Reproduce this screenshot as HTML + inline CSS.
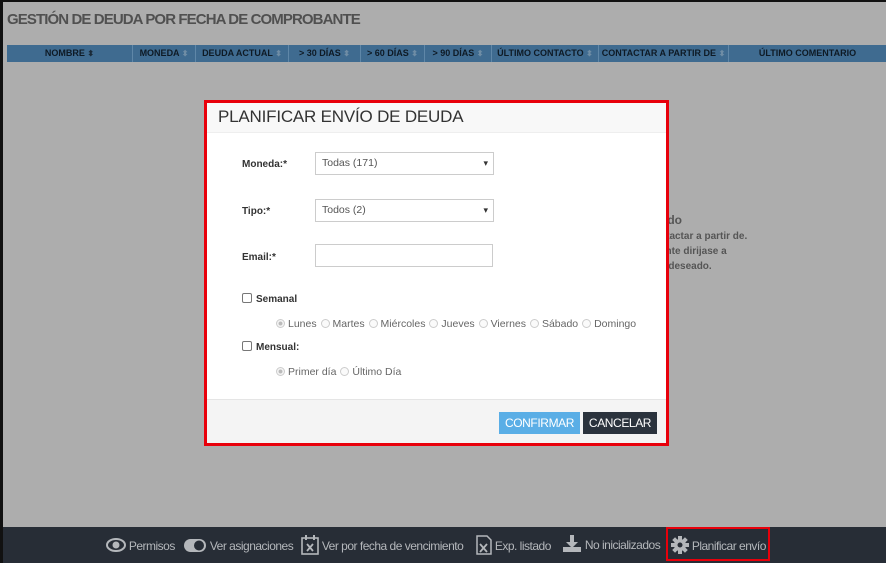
<!DOCTYPE html>
<html><head><meta charset="utf-8"><style>
*{box-sizing:border-box;margin:0;padding:0}
body{width:886px;height:563px;overflow:hidden;font-family:"Liberation Sans",sans-serif;background:#111;position:relative}
#bg{position:absolute;left:3px;top:2px;width:883px;height:525px;background:#adadad}
h1{position:absolute;left:7px;top:11px;font-size:15px;font-weight:bold;color:#505050;letter-spacing:-0.9px}
#th{position:absolute;left:7px;top:45px;width:879px;height:17px;background:#3f6b90;display:flex}
#th div{border-right:1px solid #5f87a8;color:#0e1a25;font-size:9px;font-weight:bold;text-align:center;line-height:17px;white-space:nowrap}
.s{color:#6f8da5;font-size:8px}
#bgtext{position:absolute;left:660px;top:213px;color:#555;font-size:10px;font-weight:bold;line-height:15px}
#foot{position:absolute;left:3px;top:527px;width:883px;height:36px;background:#272d36;color:#b4b7bb;font-size:12px}
.fi{position:absolute;top:11px;white-space:nowrap;letter-spacing:-0.5px}
#modal{position:absolute;left:204px;top:100px;width:465px;height:346px;border:3px solid #e8000b;background:#fff}
#mh{height:30px;background:#f8f8f8;border-bottom:1px solid #eee;font-size:17px;color:#333;padding:4px 0 0 11px;letter-spacing:-0.2px}
.lbl{position:absolute;left:35px;font-size:10px;font-weight:bold;color:#333}
.sel{position:absolute;left:108px;width:179px;height:23px;border:1px solid #ccc;font-size:10.5px;color:#555;padding:0 0 0 6px;line-height:21px}
.dd:after{content:"▾";position:absolute;right:5px;top:0;font-size:9px;color:#333}
.cb{position:absolute;left:35px;font-size:10px;font-weight:bold;color:#333}
.cb i{display:inline-block;width:10px;height:10px;border:1px solid #777;border-radius:2px;vertical-align:-1px;margin-right:4px}
.rad{position:absolute;left:68px;font-size:10.5px;color:#666;white-space:nowrap}
.rad i{display:inline-block;width:9px;height:9px;border:1px solid #ccc;border-radius:50%;vertical-align:-1px;margin:0 3px 0 1px;background:#fafafa}
.rad i.on{background:radial-gradient(#bbb 35%,#f4f4f4 45%)}
#mf{position:absolute;left:0;top:296px;width:459px;height:44px;background:#f4f4f4;border-top:1px solid #e5e5e5}
.btn{position:absolute;top:12px;height:22px;font-size:12px;color:#fff;text-align:center;line-height:22px;letter-spacing:-0.4px}
#hl{position:absolute;left:666px;top:527px;width:104px;height:34px;border:2px solid #e8000b}
</style></head><body>
<div id="bg"></div>
<h1>GESTIÓN DE DEUDA POR FECHA DE COMPROBANTE</h1>
<div id="th">
<div style="width:126px">NOMBRE <span class="s" style="color:#1a2a38">⬍</span></div>
<div style="width:63px">MONEDA <span class="s">⬍</span></div>
<div style="width:93px">DEUDA ACTUAL <span class="s">⬍</span></div>
<div style="width:72px">&gt; 30 DÍAS <span class="s">⬍</span></div>
<div style="width:64px">&gt; 60 DÍAS <span class="s">⬍</span></div>
<div style="width:67px">&gt; 90 DÍAS <span class="s">⬍</span></div>
<div style="width:107px">ÚLTIMO CONTACTO <span class="s">⬍</span></div>
<div style="width:130px">CONTACTAR A PARTIR DE <span class="s">⬍</span></div>
<div style="width:157px;border:0">ÚLTIMO COMENTARIO</div>
</div>
<div id="bgtext"><span style="font-size:12px">ndo</span><br>ntactar a partir de.<br>ente dirijase a<br>e deseado.</div>
<div id="foot">
<span class="fi" style="left:103px"><svg width="20" height="14" viewBox="0 0 20 14" style="vertical-align:-2px"><ellipse cx="10" cy="7" rx="9" ry="6" fill="none" stroke="#b4b7bb" stroke-width="2"/><circle cx="10" cy="7" r="3.5" fill="#b4b7bb"/></svg> Permisos</span>
<span class="fi" style="left:180px"><svg width="24" height="15" viewBox="0 0 24 15" style="vertical-align:-3px"><rect x="1" y="1" width="22" height="13" rx="6.5" fill="#b4b7bb"/><circle cx="16" cy="7.5" r="5" fill="#272d36"/></svg> Ver asignaciones</span>
<span class="fi" style="left:298px;top:8px"><svg width="18" height="20" viewBox="0 0 18 20" style="vertical-align:-5px"><rect x="1" y="3" width="16" height="16" fill="none" stroke="#b4b7bb" stroke-width="1.6"/><line x1="5" y1="0" x2="5" y2="5" stroke="#b4b7bb" stroke-width="2"/><line x1="13" y1="0" x2="13" y2="5" stroke="#b4b7bb" stroke-width="2"/><path d="M6 9l6 7M12 9l-6 7" stroke="#b4b7bb" stroke-width="1.8"/></svg> Ver por fecha de vencimiento</span>
<span class="fi" style="left:473px;top:8px"><svg width="16" height="20" viewBox="0 0 16 20" style="vertical-align:-5px"><path d="M1 1h10l4 4v14H1z" fill="none" stroke="#b4b7bb" stroke-width="1.5"/><path d="M4 9l7 8M11 9l-7 8" stroke="#b4b7bb" stroke-width="1.8"/></svg> Exp. listado</span>
<span class="fi" style="left:559px;top:8px"><svg width="20" height="18" viewBox="0 0 20 18" style="vertical-align:-4px"><path d="M8 0h4v7h4l-6 6-6-6h4z" fill="#b4b7bb"/><rect x="1" y="12" width="18" height="5" fill="#b4b7bb"/></svg> No inicializados</span>
<span class="fi" style="left:668px;top:9px"><svg width="18" height="18" viewBox="0 0 18 18" style="vertical-align:-4px"><g fill="#b4b7bb"><circle cx="9" cy="9" r="6"/><rect x="7" y="0" width="4" height="18"/><rect x="0" y="7" width="18" height="4"/><rect x="7" y="0" width="4" height="18" transform="rotate(45 9 9)"/><rect x="7" y="0" width="4" height="18" transform="rotate(-45 9 9)"/></g><circle cx="9" cy="9" r="2.5" fill="#272d36"/></svg> Planificar envío</span>
</div>
<div id="hl"></div>
<div id="modal">
<div id="mh">PLANIFICAR ENVÍO DE DEUDA</div>
<div class="lbl" style="top:56px">Moneda:*</div><div class="sel dd" style="top:49px">Todas (171)</div>
<div class="lbl" style="top:103px">Tipo:*</div><div class="sel dd" style="top:96px">Todos (2)</div>
<div class="lbl" style="top:149px">Email:*</div><div class="sel" style="top:141px;width:178px"></div>
<div class="cb" style="top:190px"><i></i>Semanal</div>
<div class="rad" style="top:215px"><i class="on"></i>Lunes <i></i>Martes <i></i>Miércoles <i></i>Jueves <i></i>Viernes <i></i>Sábado <i></i>Domingo</div>
<div class="cb" style="top:238px"><i></i>Mensual:</div>
<div class="rad" style="top:263px"><i class="on"></i>Primer día <i></i>Último Día</div>
<div id="mf">
<div class="btn" style="left:292px;width:81px;background:#5aaee6">CONFIRMAR</div>
<div class="btn" style="left:376px;width:74px;background:#2b333d">CANCELAR</div>
</div>
</div>
</body></html>
